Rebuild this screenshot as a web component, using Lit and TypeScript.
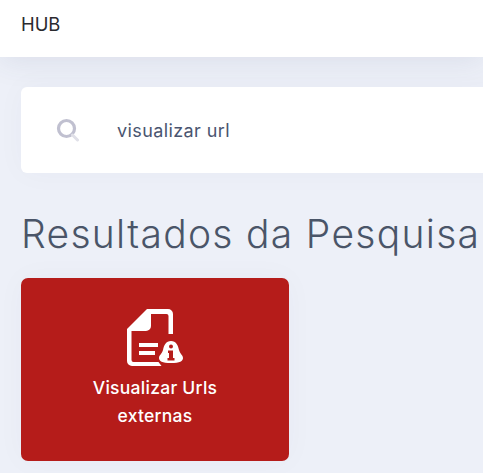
import { LitElement, html, css } from "lit";
import { customElement } from "lit/decorators.js";

@customElement("app-root")
export class AppRoot extends LitElement {
  static styles = css`
    :host { display: block; width: 483px; height: 473px; overflow: hidden; background: #edf0f8; font-family: "Inter", "Liberation Sans", sans-serif; }
    .top { height: 57px; background: #fff; display: flex; align-items: center; padding-left: 21px; box-sizing: border-box; font-size: 18.4px; color: #2a2a2f; box-shadow: 0 4px 30px rgba(60,65,110,.10); padding-bottom: 9px; }
    main { padding: 30px 0 0 21px; }
    .search { width: 520px; height: 86px; background: #fff; border-radius: 6px; display: flex; align-items: center; box-sizing: border-box; padding-left: 35px; gap: 37px; box-shadow: 0 0 30px rgba(60,65,110,.03); }
    .search svg { flex: none; }
    .search span { font-size: 18px; letter-spacing: .4px; color: #4a5570; white-space: nowrap; }
    h1 { margin: 34px 0 0; font-size: 39px; letter-spacing: 1.3px; line-height: 54px; font-weight: 300; color: #4a5568; white-space: nowrap; }
    .card { margin-top: 17px; width: 268px; height: 183px; background: #b51c1a; border-radius: 7px; display: flex; flex-direction: column; align-items: center; color: #fff; box-shadow: 0 0 30px rgba(60,65,110,.03); }
    .card svg { margin-top: 30px; flex: none; }
    .label { margin-top: 6px; width: 170px; text-align: center; font-size: 17.5px; letter-spacing: .27px; line-height: 28px; font-weight: 500; }
  `;

  render() {
    return html`
      <div class="top">HUB</div>
      <main>
        <div class="search">
          <svg width="24" height="24" viewBox="0 0 24 24" fill="none">
            <circle cx="10.5" cy="10.5" r="8" stroke="#c0c0d0" stroke-width="3.2"/>
            <path d="M16.5 17l5 5" stroke="#e0e0e8" stroke-width="3" stroke-linecap="round"/>
          </svg>
          <span>visualizar url</span>
        </div>
        <h1>Resultados da Pesquisa</h1>
        <div class="card">
          <svg width="60" height="60" viewBox="0 0 60 60">
            <path fill="#fff" d="M22 1H43a5 5 0 0 1 5 5V26H43.500V8a2 2 0 0 0-2-2H26V18a5 5 0 0 1-5 5H6.500V52a2 2 0 0 0 2 2H33.500l3 4H7a5 5 0 0 1-5-5V21Z"/>
            <rect x="14" y="35" width="19" height="4" fill="#fff"/>
            <rect x="14" y="43" width="16" height="4" fill="#fff"/>
            <path fill="#fff" d="M46 33C51 33 53 37 54 42 55 46 58 47 58 50 58 53 55 55 46 55 37 55 34 53 34 50 34 47 37 46 38 42 39 37 41 33 46 33Z"/>
            <circle cx="46" cy="38.500" r="2" fill="#b51c1a"/>
            <path fill="#b51c1a" d="M43 42.500h5V50h1.500v2.500h-7V50H44V45H43Z"/>
          </svg>
          <div class="label">Visualizar Urls externas</div>
        </div>
      </main>
    `;
  }
}
